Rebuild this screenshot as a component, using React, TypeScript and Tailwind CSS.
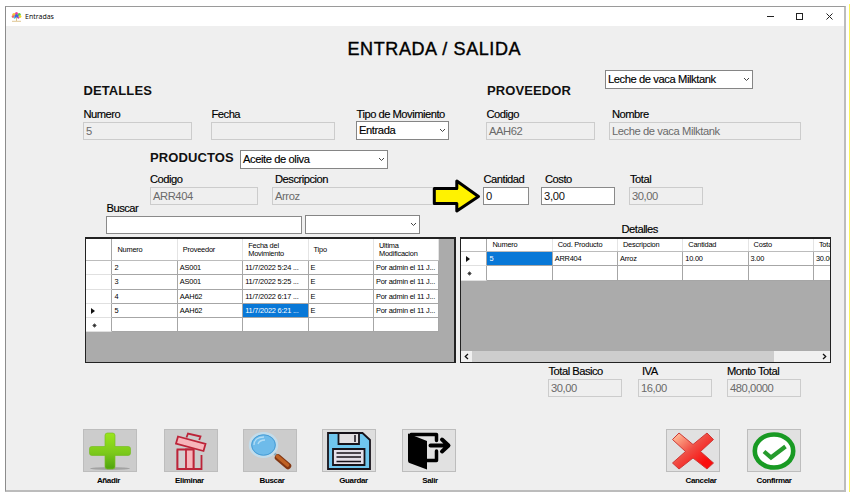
import React from "react";

type Box = { className?: string; children?: React.ReactNode };

const Label = ({ className = "", children }: Box) => (
  <div className={"h-4 shrink-0 whitespace-nowrap text-[11.2px] leading-4 tracking-[-0.5px] text-black [-webkit-text-stroke:0.15px_black] " + className}>{children}</div>
);

const Disabled = ({ className = "", children }: Box) => (
  <div className={"h-[18px] whitespace-nowrap border border-[#cccccc] bg-[#efefef] pl-[2px] text-[11.2px] leading-4 tracking-[-0.42px] text-[#6a6a6a] " + className}>{children}</div>
);

const Input = ({ className = "", children }: Box) => (
  <div className={"h-[18px] whitespace-nowrap border border-[#8a8a8a] bg-white pl-[2px] text-[11.2px] leading-4 tracking-[-0.3px] text-[#111] " + className}>{children}</div>
);

const Combo = ({ className = "", children }: Box) => (
  <div className={"flex h-[19px] shrink-0 items-center justify-between whitespace-nowrap border border-[#858585] bg-white pr-[2px] pl-[2px] text-[11.2px] leading-4 tracking-[-0.42px] text-black " + className}>
    <span className="pb-[2px] [-webkit-text-stroke:0.15px_black]">{children}</span>
    <svg width="7" height="5" viewBox="0 0 7 5" fill="none" stroke="#444" strokeWidth="1"><path d="M1 1l2.5 2.5L6 1" /></svg>
  </div>
);

const Field = ({ className = "", children }: Box) => <div className={"flex shrink-0 flex-col " + className}>{children}</div>;

const Head = ({ className = "", children }: Box) => (
  <div className={"flex shrink-0 items-center border-r border-[#e4e4e4] pl-[5px] leading-[8px] " + className}>{children}</div>
);

const Cell = ({ className = "w-[65.4px]", children }: Box) => (
  <div className={"shrink-0 overflow-hidden border-r border-b border-[#a6a6a6] pl-[2px] " + className}>{children}</div>
);

const Marker = ({ kind }: { kind?: string }) => (
  <div className="flex w-[26.4px] shrink-0 items-center border-r border-b border-r-[#a6a6a6] border-b-[#e0e0e0] pl-[5px]">
    {kind === "current" && <svg width="4" height="6" viewBox="0 0 4 6"><path d="M0 0l4 3-4 3z" fill="#111" /></svg>}
    {kind === "new" && <svg className="mt-px ml-px" width="5" height="5" viewBox="0 0 5 5"><path d="M2.5 .5v4M.5 2.5h4M1.200 1.200l2.600 2.600M3.800 1.200L1.200 3.800" stroke="#222" strokeWidth=".8" /></svg>}
  </div>
);

const movements = [
  ["2", "AS001", "11/7/2022 5:24 ..."],
  ["3", "AS001", "11/7/2022 5:25 ..."],
  ["4", "AAH62", "11/7/2022 6:17 ..."],
  ["5", "AAH62", "11/7/2022 6:21 ..."],
];

const Action = ({ name, className = "", tone = "bg-[#cccccc]", shift = "", children }: Box & { name: string; tone?: string; shift?: string }) => (
  <div className={"flex w-[54px] shrink-0 flex-col items-center " + className}>
    <div className={"flex h-[43px] w-[54px] items-center justify-center border border-[#bdbdbd] " + tone}>{children}</div>
    <div className={"mt-[3px] whitespace-nowrap text-[8px] leading-[12px] font-bold tracking-[-0.35px] text-black " + shift}>{name}</div>
  </div>
);

export default function App() {
  return (
    <div className="flex h-[500px] w-[851px] items-start overflow-hidden bg-white pl-[5px] font-['Liberation_Sans',Arial,sans-serif]">
      <div className="mt-[6px] flex h-[486px] w-[841px] shrink-0 flex-col border border-r-2 border-b-2 border-t-[#9a9a9a] border-r-[#bcbcbc] border-b-[#bcbcbc] border-l-[#8c8c8c] bg-[#efefef]">
        <header className="flex h-[19px] shrink-0 items-center bg-white pr-[10px] pl-[5px]">
          <svg width="11" height="10" viewBox="0 0 11 10">
            <circle cx="3" cy="2.6" r="1.7" fill="#f5c63a" /><circle cx="5.5" cy="1.6" r="1.5" fill="#f03f96" /><circle cx="8.2" cy="2.6" r="1.6" fill="#5cc84c" />
            <circle cx="2" cy="4.6" r="1.3" fill="#f06868" /><circle cx="9" cy="4.6" r="1.4" fill="#f5dc25" /><circle cx="5.5" cy="4.2" r="2" fill="#3f66dd" />
            <path d="M5.5 5v4M1 9.300h9" stroke="#d7b878" strokeWidth=".8" /><circle cx="3.600" cy="5.800" r="1" fill="#4dbfdc" /><circle cx="7.400" cy="5.800" r="1" fill="#cc46ae" />
          </svg>
          <span className="ml-[3px] font-['Open_Sans','Noto_Sans',sans-serif] text-[7px] leading-[10px] text-black">Entradas</span>
          <svg className="ml-auto" width="68" height="9" viewBox="0 0 68 9" fill="none" stroke="#222" strokeWidth="1">
            <path d="M1 4.500h7" /><rect x="30.500" y="1.500" width="6" height="6" /><path d="M60.500 1.500l6 6M66.500 1.500l-6 6" />
          </svg>
        </header>

        <h1 className="h-[44px] shrink-0 pl-[341.5px] text-[18px] leading-[46px] tracking-[0.6px] whitespace-nowrap text-black [-webkit-text-stroke:0.4px_black]">ENTRADA / SALIDA</h1>

        <div className="flex h-[36px] shrink-0 pl-[77.5px]">
          <h2 className="w-[403.5px] pt-[13px] text-[13px] leading-4 font-bold tracking-[0.1px] text-[#111]">DETALLES</h2>
          <h2 className="w-[118px] pt-[13px] text-[13px] leading-4 font-bold tracking-[0.1px] text-[#111]">PROVEEDOR</h2>
          <Combo className="w-[148px]">Leche de vaca Milktank</Combo>
        </div>

        <div className="flex h-[44px] shrink-0 pl-[77px]">
          <Field className="w-[109px]"><Label className="pl-[0.5px]">Numero</Label><Disabled>5</Disabled></Field>
          <Field className="ml-[19px] w-[124px]"><Label className="pl-[0.5px]">Fecha</Label><Disabled /></Field>
          <Field className="ml-[21px] w-[93px]"><Label className="-mb-px pl-[0.5px]">Tipo de Movimiento</Label><Combo>Entrada</Combo></Field>
          <Field className="ml-[37px] w-[109px]"><Label className="pl-[0.5px]">Codigo</Label><Disabled>AAH62</Disabled></Field>
          <Field className="ml-[14px] w-[192px]"><Label className="pl-[3px]">Nombre</Label><Disabled>Leche de vaca Milktank</Disabled></Field>
        </div>

        <div className="flex h-[21px] shrink-0 pl-[144px]">
          <h2 className="w-[90px] text-[13px] leading-4 font-bold tracking-[0.1px] text-[#111]">PRODUCTOS</h2>
          <Combo className="w-[148px]">Aceite de oliva</Combo>
        </div>

        <div className="relative flex h-[33px] shrink-0 pl-[144px]">
          <Field className="w-[108px]"><Label>Codigo</Label><Disabled>ARR404</Disabled></Field>
          <Field className="ml-[14px] w-[172px]"><Label className="pl-[3px]">Descripcion</Label><Disabled>Arroz</Disabled></Field>
          <Field className="ml-[39px] w-[46px]"><Label className="pl-[0.5px]">Cantidad</Label><Input>0</Input></Field>
          <Field className="ml-[12px] w-[74px]"><Label className="pl-[4px]">Costo</Label><Input>3,00</Input></Field>
          <Field className="ml-[14px] w-[74px]"><Label className="pl-[1px]">Total</Label><Disabled>30,00</Disabled></Field>
          <svg className="absolute top-[7px] left-[426px]" width="50" height="36" viewBox="0 0 50 36">
            <path d="M2.300 10.500H24.800V3L46.500 18.500 24.800 33V25.500H2.300z" fill="#fff200" stroke="#000" strokeWidth="3" strokeLinejoin="round" />
          </svg>
        </div>

        <div className="flex h-[33px] shrink-0 pl-[100px]">
          <Field className="w-[196px]"><Label className="-mt-[4px] pl-[0.5px]">Buscar</Label><Input /></Field>
          <Combo className="mt-[11px] ml-[3px] w-[115px]" />
          <Label className="mt-[17px] ml-[201.5px]">Detalles</Label>
        </div>

        <div className="flex h-[126px] shrink-0 pl-[79px] text-[7.4px] leading-[13.6px] tracking-[-0.2px] whitespace-nowrap text-black">
          <section className="flex w-[371px] shrink-0 flex-col overflow-hidden border-[#222] bg-[#ababab] [border-width:2px_2px_1.5px_1px]">
            <div className="flex h-[22px] w-[353.4px] border-b border-[#bcbcbc] bg-white">
              <Head className="w-[26.4px] border-r-[#a6a6a6]" />
              <Head className="w-[65.4px]">Numero</Head><Head className="w-[65.4px]">Proveedor</Head>
              <Head className="w-[65.4px]">Fecha del<br />Movimiento</Head><Head className="w-[65.4px]">Tipo</Head>
              <Head className="w-[65.4px]">Ultima<br />Modificacion</Head>
            </div>
            {movements.map(([id, supplier, date]) => (
              <div key={id} className="flex h-[14.3px] w-[353.4px] bg-white">
                <Marker kind={id === "5" ? "current" : ""} />
                <Cell>{id}</Cell><Cell>{supplier}</Cell>
                <Cell className={id === "5" ? "w-[65.4px] bg-[#0878d7] text-white" : "w-[65.4px]"}>{date}</Cell>
                <Cell>E</Cell><Cell>Por admin el 11 J...</Cell>
              </div>
            ))}
            <div className="flex h-[14.3px] w-[353.4px] bg-white"><Marker kind="new" /><Cell /><Cell /><Cell /><Cell /><Cell /></div>
          </section>

          <section className="ml-[4px] flex w-[371px] shrink-0 flex-col overflow-hidden border-[#222] bg-[#ababab] [border-width:2px_1.5px_1.5px_1px]">
            <div className="flex h-[13px] border-b border-[#bcbcbc] bg-white">
              <Head className="w-[26.4px] border-r-[#a6a6a6]" />
              <Head className="w-[65.3px]">Numero</Head><Head className="w-[65.3px]">Cod. Producto</Head><Head className="w-[65.3px]">Descripcion</Head>
              <Head className="w-[65.3px]">Cantidad</Head><Head className="w-[65.3px]">Costo</Head><Head className="w-[65.3px]">Total</Head>
            </div>
            <div className="flex h-[14.3px] bg-white">
              <Marker kind="current" />
              <Cell className="w-[65.3px] bg-[#0878d7] text-white">5</Cell><Cell className="w-[65.3px]">ARR404</Cell><Cell className="w-[65.3px]">Arroz</Cell>
              <Cell className="w-[65.3px]">10.00</Cell><Cell className="w-[65.3px]">3.00</Cell><Cell className="w-[65.3px]">30.00</Cell>
            </div>
            <div className="flex h-[14.3px] bg-white">
              <Marker kind="new" />
              <Cell className="w-[65.3px]" /><Cell className="w-[65.3px]" /><Cell className="w-[65.3px]" /><Cell className="w-[65.3px]" /><Cell className="w-[65.3px]" /><Cell className="w-[65.3px]" />
            </div>
            <div className="mt-auto flex h-[11px] shrink-0 items-center justify-between bg-[#f0f0f0] px-[3px]">
              <svg width="5" height="7" viewBox="0 0 5 7" fill="none" stroke="#111" strokeWidth="1.3"><path d="M4 1L1.300 3.500 4 6" /></svg>
              <div className="mr-auto ml-[3px] h-full w-[302px] bg-[#cdcdcd]" />
              <svg width="5" height="7" viewBox="0 0 5 7" fill="none" stroke="#111" strokeWidth="1.3"><path d="M1 1l2.700 2.500L1 6" /></svg>
            </div>
          </section>
        </div>

        <div className="flex h-[66px] shrink-0 pl-[542px]">
          <Field className="w-[74px]"><Label className="pl-[0.5px]">Total Basico</Label><Disabled>30,00</Disabled></Field>
          <Field className="ml-[16px] w-[74px]"><Label className="pl-[4px]">IVA</Label><Disabled>16,00</Disabled></Field>
          <Field className="ml-[15px] w-[74px]"><Label>Monto Total</Label><Disabled>480,0000</Disabled></Field>
        </div>

        <div className="flex h-[61px] shrink-0 pl-[77px]">
          <Action name="Añadir" shift="-ml-[3px]">
            <svg width="46" height="40" viewBox="0 0 46 40">
              <defs><linearGradient id="green" x2="0" y2="1"><stop stopColor="#9ae51b" /><stop offset=".55" stopColor="#7cc91c" /><stop offset="1" stopColor="#4fa40e" /></linearGradient></defs>
              <ellipse cx="23" cy="37.500" rx="20" ry="1.500" fill="#a2a2a2" />
              <path d="M20.500 2H25.500Q28 2 28 4.500V15.500H41Q43.500 15.500 43.500 17.500V22Q43.500 24.500 41 24.500H28V35.500Q28 38 25.500 38H20.500Q18 38 18 35.500V24.500H5Q2.500 24.500 2.500 22V17.500Q2.500 15.500 5 15.500H18V4.500Q18 2 20.500 2z" fill="url(#green)" stroke="#79bd25" strokeWidth=".7" />
            </svg>
          </Action>
          <Action name="Eliminar" className="ml-[26.5px]" shift="-ml-[2px]">
            <svg width="34" height="40" viewBox="0 0 34 40" fill="#f7b5bb" stroke="#bc2439" strokeWidth="1.8">
              <path d="M12.500 6.500L14 2.500 26.500 5.500 25.200 9" fill="none" />
              <path d="M4 5.500L31.500 13 29.500 20 2 12.500z" />
              <path d="M3.500 18.500V38H27.500V24" fill="none" /><path d="M3.500 18.500H19.500V38H3.500z" fill="#d4ced0" /><path d="M12 18.500H19.500V38H12z" />
            </svg>
          </Action>
          <Action name="Buscar" className="ml-[25px]" shift="ml-[5px]">
            <svg width="46" height="40" viewBox="0 0 46 40">
              <path d="M25 20l6 6" stroke="#8aa9bb" strokeWidth="2.500" /><path d="M31 26.500L41 35" stroke="#833713" strokeWidth="6.500" strokeLinecap="round" /><path d="M30.500 25.500L40.500 34" stroke="#c06224" strokeWidth="3.600" strokeLinecap="round" />
              <ellipse cx="16.500" cy="14" rx="13.500" ry="11.800" fill="#6ebbea" stroke="#c3dcea" strokeWidth="2.500" /><ellipse cx="16.500" cy="14" rx="11.800" ry="10.200" fill="none" stroke="#4a9ed6" strokeWidth="1" />
              <path d="M7 14c0-5 4-8 10-8M11 13c1-3 3-4 7-4" fill="none" stroke="#b2ddf5" strokeWidth="1.300" />
            </svg>
          </Action>
          <Action name="Guardar" className="ml-[25.5px]" shift="ml-[9px]" tone="bg-[#dedede]">
            <svg width="46" height="40" viewBox="0 0 46 40" stroke="#17121a" strokeWidth="1.8">
              <path d="M2 2H36.500L44 9V38H2z" fill="#6fc6ee" /><path d="M12.500 2H33V13H12.500z" fill="#e3dfe2" /><path d="M29 4V11" strokeWidth="1.500" />
              <path d="M7 18H38.500V34H7z" fill="#e4dfe9" /><path d="M10.500 22H35M10.500 26H35M10.500 30.500H35" strokeWidth="1.500" />
            </svg>
          </Action>
          <Action name="Salir" className="ml-[26px]" shift="ml-[2px]" tone="bg-[#e1e1e1]">
            <svg width="46" height="40" viewBox="0 0 46 40">
              <path d="M5 3.500H30.500V9.500M20 29.500H30.500V20" fill="none" stroke="#000" strokeWidth="3.500" strokeLinejoin="round" strokeLinecap="round" />
              <path d="M2 2.500L21 10V38.500L3.500 32Q2 31.500 2 29.500z" fill="#000" />
              <path d="M24.500 14.500H42M36 8.500l6.500 6-6.500 6" fill="none" stroke="#000" strokeWidth="4" strokeLinejoin="round" strokeLinecap="round" />
            </svg>
          </Action>
          <Action name="Cancelar" className="ml-[210px]" shift="ml-[16px]" tone="bg-[#e1e1e1]">
            <svg width="46" height="40" viewBox="0 0 46 40">
              <defs><linearGradient id="red" x2="1" y2="1"><stop offset=".1" stopColor="#ffb18f" /><stop offset=".45" stopColor="#f04c43" /><stop offset=".8" stopColor="#fa0d0d" /></linearGradient></defs>
              <path d="M9 2L23 13.500 37 2 43.500 8.500 30.500 20.500 43.500 32 37 38 23 27 9 38 2.500 32 15.500 20.500 2.500 8.500z" fill="url(#red)" stroke="#ce3735" />
            </svg>
          </Action>
          <Action name="Confirmar" className="ml-[27px]" shift="" tone="bg-[#e1e1e1]">
            <svg width="46" height="40" viewBox="0 0 46 40"><ellipse cx="23" cy="20" rx="19.200" ry="16.500" fill="#fff" stroke="#189a23" strokeWidth="4.600" /><path d="M13 20.500L20 26.500 34.500 15.500" fill="none" stroke="#269b2d" strokeWidth="4.200" /></svg>
          </Action>
        </div>
        <svg className="ml-auto" width="7" height="6" viewBox="0 0 7 6" fill="#b5b5b5"><path d="M5 0h1v1H5zM3 2h1v1H3zM5 2h1v1H5zM1 4h1v1H1zM3 4h1v1H3zM5 4h1v1H5z" /></svg>
      </div>
      <div className="mt-[4px] ml-[3px] h-[488px] w-px shrink-0 bg-[#fbf45b]" />
    </div>
  );
}
